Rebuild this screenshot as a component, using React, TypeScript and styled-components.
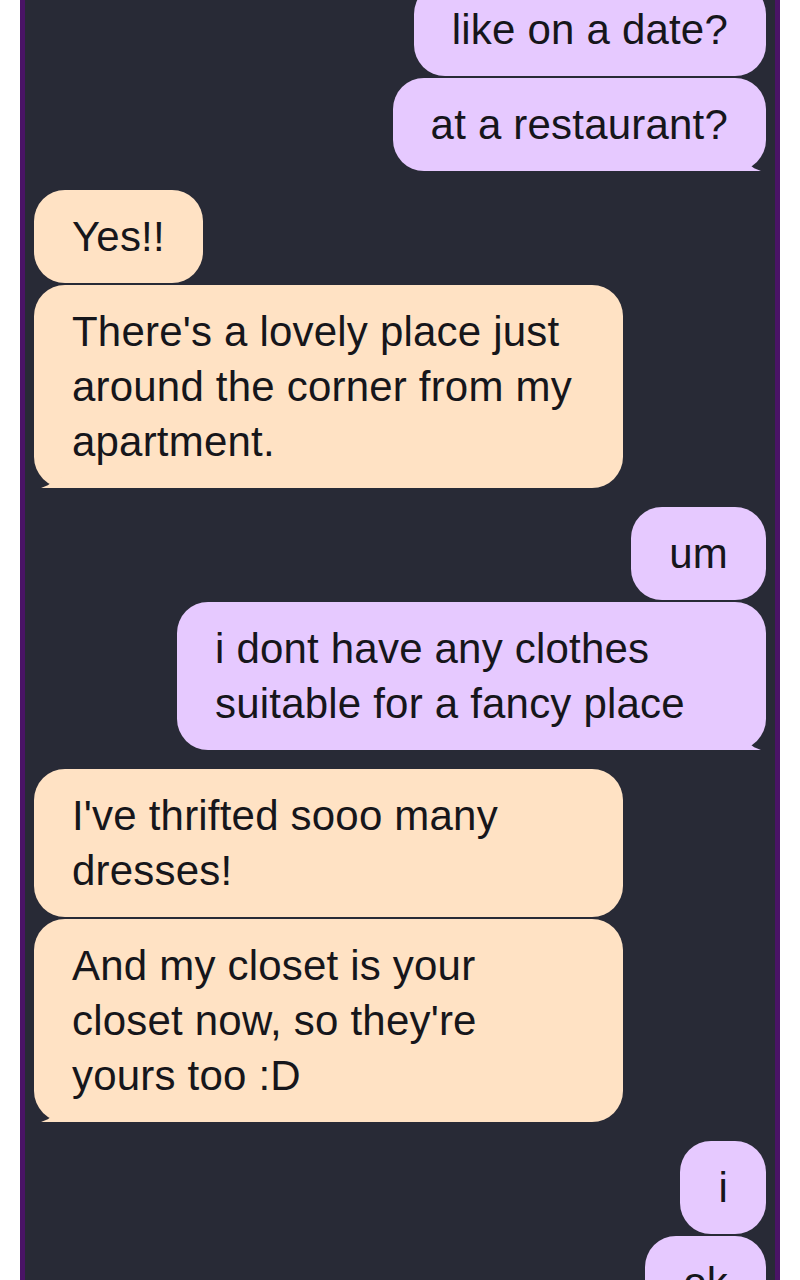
import React from "react";
import styled, { createGlobalStyle, css } from "styled-components";

const GlobalStyle = createGlobalStyle`
  html, body {
    margin: 0;
    padding: 0;
    background: #ffffff;
  }
`;

const Panel = styled.div`
  width: 750px;
  min-height: 1400px;
  margin: 0 20px;
  background: #282a36;
  border-left: 5px solid #4a1466;
  border-right: 5px solid #4a1466;
  overflow: hidden;
`;

const Thread = styled.div`
  display: flex;
  flex-direction: column;
  gap: 19px;
  margin-top: -17px;
  padding: 0 9px;
`;

const Group = styled.div<{ $me: boolean }>`
  display: flex;
  flex-direction: column;
  align-items: ${(p) => (p.$me ? "flex-end" : "flex-start")};
  gap: 2px;
`;

const Bubble = styled.div<{ $me: boolean; $tail: boolean }>`
  position: relative;
  box-sizing: border-box;
  max-width: 589px;
  padding: 19px 38px;
  border-radius: 31px;
  font-family: "Liberation Sans", Arial, sans-serif;
  font-size: 42px;
  letter-spacing: 0.2px;
  line-height: 55px;
  color: #16161b;
  background: ${(p) => (p.$me ? "#e6c9ff" : "#ffe2c4")};

  ${(p) =>
    p.$tail &&
    css`
      &::after {
        content: "";
        position: absolute;
        bottom: 0;
        width: 34px;
        height: 12px;
        background: inherit;
        ${p.$me
          ? css`
              right: 5px;
              clip-path: polygon(0 0, 45% 10%, 62% 40%, 80% 78%, 100% 100%, 0 100%);
            `
          : css`
              left: 7px;
              clip-path: polygon(100% 0, 55% 10%, 38% 40%, 20% 78%, 0 100%, 100% 100%);
            `}
      }
    `}
`;

type Group = { me: boolean; lines: string[] };

const thread: Group[] = [
  { me: true, lines: ["like on a date?", "at a restaurant?"] },
  {
    me: false,
    lines: ["Yes!!", "There's a lovely place just around the corner from my apartment."],
  },
  { me: true, lines: ["um", "i dont have any clothes suitable for a fancy place"] },
  {
    me: false,
    lines: [
      "I've thrifted sooo many dresses!",
      "And my closet is your closet now, so they're yours too :D",
    ],
  },
  { me: true, lines: ["i", "ok"] },
];

const App = () => (
  <>
    <GlobalStyle />
    <Panel>
      <Thread>
        {thread.map((g, i) => (
          <Group key={i} $me={g.me}>
            {g.lines.map((line, j) => (
              <Bubble key={j} $me={g.me} $tail={j === g.lines.length - 1}>
                {line}
              </Bubble>
            ))}
          </Group>
        ))}
      </Thread>
    </Panel>
  </>
);

export default App;
